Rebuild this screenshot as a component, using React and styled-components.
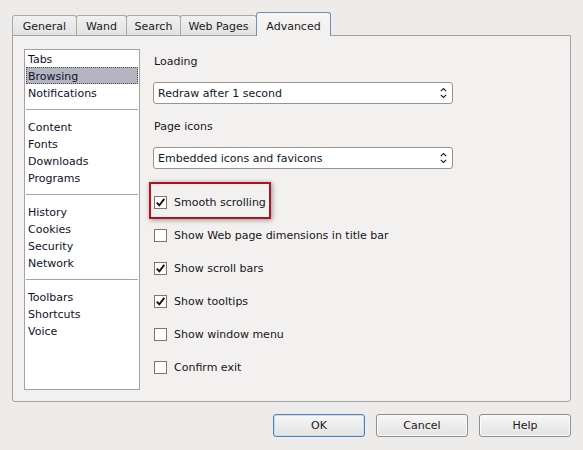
import React from "react";
import styled, { createGlobalStyle } from "styled-components";

const Global = createGlobalStyle`
  html, body { margin: 0; padding: 0; }
  body {
    background: #edecea;
    font-family: "DejaVu Sans", Verdana, sans-serif;
    font-size: 11px;
    color: #151520;
  }
  * { box-sizing: border-box; }
`;

const Dialog = styled.div`
  width: 583px;
  height: 450px;
  padding: 12px 12px 0 12px;
  display: flex;
  flex-direction: column;
`;

const TabBar = styled.div`
  display: flex;
  align-items: flex-end;
  height: 23px;
  position: relative;
  z-index: 1;
`;

const Tab = styled.div`
  width: ${(p) => p.$w}px;
  margin-left: ${(p) => (p.$first ? 0 : -1)}px;
  height: ${(p) => (p.$active ? 24 : 20)}px;
  margin-bottom: ${(p) => (p.$active ? -1 : 0)}px;
  border: 1px solid ${(p) => (p.$active ? "#7391b6" : "#a9a9a9")};
  border-bottom: none;
  border-radius: 3px 3px 0 0;
  background: ${(p) =>
    p.$active
      ? "linear-gradient(#f7f7f6, #f2f1ef 60%)"
      : "linear-gradient(#f1f1f1, #e2e2e2)"};
  display: flex;
  align-items: flex-end;
  justify-content: center;
  line-height: 17px;
  padding-bottom: ${(p) => (p.$active ? 1 : 0)}px;
  color: #1a1a1a;
  position: relative;
  z-index: ${(p) => (p.$active ? 2 : 1)};
`;

const Panel = styled.div`
  height: 367px;
  border: 1px solid #a2a2a2;
  border-radius: 0 0 3px 3px;
  background: #f2f1ef;
  padding: 13px 11px 11px 11px;
  display: flex;
`;

const List = styled.div`
  width: 116px;
  height: 341px;
  background: #fff;
  border: 1px solid #a3a3a3;
  display: flex;
  flex-direction: column;
`;

const ListItem = styled.div`
  height: 17px;
  line-height: 17px;
  margin: 0 1px;
  padding-left: 1px;
  border: 1px ${(p) => (p.$selected ? "dotted #4a4a55" : "solid transparent")};
  background: ${(p) => (p.$selected ? "#b4b5c1" : "transparent")};
  color: #101028;
  overflow: visible;
  white-space: nowrap;
`;

const Separator = styled.div`
  height: 1px;
  margin: 8px 1px;
  background: #aaa59c;
`;

const Content = styled.div`
  margin-left: 13px;
  width: 300px;
  padding-top: 4px;
  display: flex;
  flex-direction: column;
`;

const Label = styled.div`
  height: 17px;
  line-height: 17px;
  padding-left: 1px;
  margin-bottom: 12px;
`;

const Select = styled.div`
  height: 22px;
  border: 1px solid #9b948a;
  border-radius: 3px;
  background: #fff;
  display: flex;
  align-items: center;
  justify-content: space-between;
  padding: 0 5px 0 4px;
  margin-bottom: ${(p) => p.$mb}px;
`;

const Options = styled.div`
  display: flex;
  flex-direction: column;
  gap: 16px;
`;

const Row = styled.div`
  height: 17px;
  display: flex;
  align-items: center;
  gap: 7px;
  padding-left: 1px;
  position: relative;
`;

const Box = styled.div`
  width: 13px;
  height: 13px;
  border: 1px solid #7b7770;
  background: #fff;
  display: flex;
  align-items: center;
  justify-content: center;
`;

const Highlight = styled.div`
  position: absolute;
  left: -4px;
  top: -12px;
  width: 122px;
  height: 37px;
  border: 2px solid #b3121d;
  box-shadow: 1px 1px 5px rgba(0, 0, 0, 0.4);
  pointer-events: none;
`;

const Buttons = styled.div`
  display: flex;
  justify-content: flex-end;
  gap: 11px;
  margin-top: 12px;
`;

const Button = styled.div`
  width: 92px;
  height: 23px;
  border: 1px solid ${(p) => (p.$default ? "#4f82b7" : "#8f8f8f")};
  border-radius: 3px;
  background: linear-gradient(#f8f8f8, #ececec 50%, #e4e4e4);
  box-shadow: ${(p) => (p.$default ? "inset 0 0 0 1px #c6dbef" : "inset 0 0 0 1px #fbfbfb")};
  display: flex;
  align-items: center;
  justify-content: center;
  color: #1a1a1a;
`;

const Chevrons = () => (
  <svg width="7" height="12" viewBox="0 0 7 12">
    <path d="M0.8 4.2 L3.5 1.5 L6.2 4.2" fill="none" stroke="#222" strokeWidth="1.2" />
    <path d="M0.8 7.8 L3.5 10.5 L6.2 7.8" fill="none" stroke="#222" strokeWidth="1.2" />
  </svg>
);

const Check = () => (
  <svg width="11" height="11" viewBox="0 0 11 11">
    <path d="M1.8 5.6 L4.3 8.3 L9.3 1.8" fill="none" stroke="#111" strokeWidth="1.9" />
  </svg>
);

const tabs = [
  { label: "General", w: 65 },
  { label: "Wand", w: 51 },
  { label: "Search", w: 55 },
  { label: "Web Pages", w: 77 },
  { label: "Advanced", w: 75, active: true },
];

const groups = [
  ["Tabs", "Browsing", "Notifications"],
  ["Content", "Fonts", "Downloads", "Programs"],
  ["History", "Cookies", "Security", "Network"],
  ["Toolbars", "Shortcuts", "Voice"],
];

const options = [
  { label: "Smooth scrolling", checked: true, highlight: true },
  { label: "Show Web page dimensions in title bar", checked: false },
  { label: "Show scroll bars", checked: true },
  { label: "Show tooltips", checked: true },
  { label: "Show window menu", checked: false },
  { label: "Confirm exit", checked: false },
];

export default function App() {
  return (
    <>
      <Global />
      <Dialog>
        <TabBar>
          {tabs.map((t, i) => (
            <Tab key={t.label} $w={t.w} $first={i === 0} $active={t.active}>
              {t.label}
            </Tab>
          ))}
        </TabBar>
        <Panel>
          <List>
            {groups.map((g, gi) => (
              <React.Fragment key={gi}>
                {gi > 0 && <Separator />}
                {g.map((item) => (
                  <ListItem key={item} $selected={item === "Browsing"}>
                    {item}
                  </ListItem>
                ))}
              </React.Fragment>
            ))}
          </List>
          <Content>
            <Label>Loading</Label>
            <Select $mb={14}>
              <span>Redraw after 1 second</span>
              <Chevrons />
            </Select>
            <Label>Page icons</Label>
            <Select $mb={25}>
              <span>Embedded icons and favicons</span>
              <Chevrons />
            </Select>
            <Options>
              {options.map((o) => (
                <Row key={o.label}>
                  <Box>{o.checked && <Check />}</Box>
                  <span>{o.label}</span>
                  {o.highlight && <Highlight />}
                </Row>
              ))}
            </Options>
          </Content>
        </Panel>
        <Buttons>
          <Button $default>OK</Button>
          <Button>Cancel</Button>
          <Button>Help</Button>
        </Buttons>
      </Dialog>
    </>
  );
}
